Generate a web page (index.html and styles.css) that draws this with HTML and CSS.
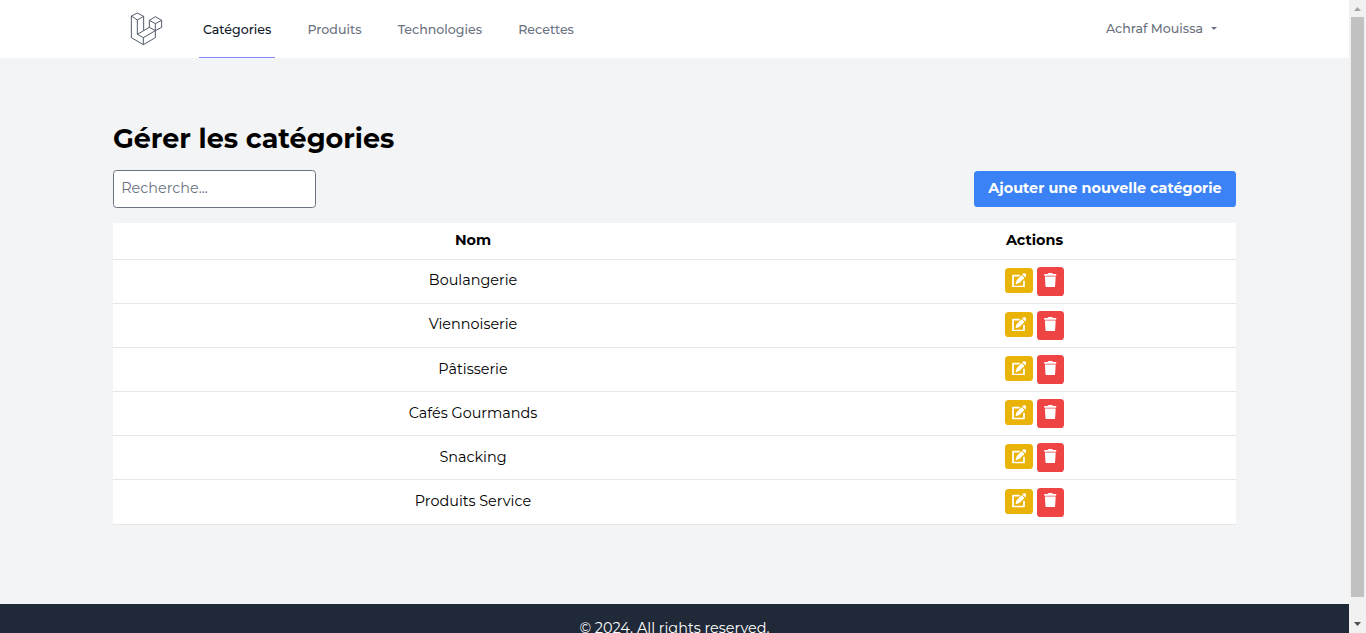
FILE: index.html
```html
<!DOCTYPE html>
<html lang="fr">
<head>
<meta charset="utf-8">
<title>Gérer les catégories</title>
<link rel="stylesheet" href="styles.css">
</head>
<body>
<svg width="0" height="0" class="sprite">
  <symbol id="edit" viewBox="0 0 512 512"><path d="M471.6 21.7c-21.9-21.9-57.3-21.9-79.2 0L362.3 51.7l97.9 97.9 30.1-30.1c21.9-21.9 21.9-57.3 0-79.2L471.6 21.7zM172.4 241.7c-6.1 6.1-10.8 13.6-13.5 21.9l-29.6 88.8c-2.9 8.6-.6 18.1 5.8 24.6s15.9 8.7 24.6 5.8l88.8-29.6c8.2-2.7 15.7-7.4 21.9-13.5L437.7 172.3 339.7 74.3 172.4 241.7z"/><path d="M270 90H36V476H420V270" fill="none" stroke="#fff" stroke-width="62" stroke-linejoin="round"/></symbol>
  <symbol id="trash" viewBox="0 0 448 512"><path d="M135.2 17.7L128 32H32C14.3 32 0 46.3 0 64S14.3 96 32 96H416c17.7 0 32-14.3 32-32s-14.3-32-32-32H320l-7.2-14.3C307.4 6.8 296.3 0 284.2 0H163.8c-12.1 0-23.2 6.8-28.6 17.7zM416 128H32L53.2 467c1.6 25.3 22.6 45 47.9 45H346.9c25.3 0 46.3-19.7 47.9-45L416 128z"/></symbol>
</svg>
<div class="window">
  <div class="page">
    <header class="navbar">
      <svg class="logo" viewBox="60 36 99 102"><path d="M64 48L82 39L101 49L82 60ZM64 48V113L100 134L136 113V92M82 60V103L100 113V134M101 49V92M82 103L118 82V61L136 50L155 61V82L136 92L118 82M118 61L136 71L155 61M136 71V92L100 113"/></svg>
      <nav class="links">
        <a class="link active">Catégories</a>
        <a class="link">Produits</a>
        <a class="link">Technologies</a>
        <a class="link">Recettes</a>
      </nav>
      <div class="user"><span>Achraf Mouissa</span><i class="caret"></i></div>
    </header>
    <main class="content">
      <h1 class="title">Gérer les catégories</h1>
      <div class="toolbar">
        <input class="search" type="text" placeholder="Recherche...">
        <button class="add">Ajouter une nouvelle catégorie</button>
      </div>
      <div class="table">
        <div class="row head"><div>Nom</div><div>Actions</div></div>
        <div class="row"><div class="name">Boulangerie</div><div class="actions"><span class="btn edit"><svg><use href="#edit"/></svg></span><span class="btn trash"><svg><use href="#trash"/></svg></span></div></div>
        <div class="row"><div class="name">Viennoiserie</div><div class="actions"><span class="btn edit"><svg><use href="#edit"/></svg></span><span class="btn trash"><svg><use href="#trash"/></svg></span></div></div>
        <div class="row"><div class="name">Pâtisserie</div><div class="actions"><span class="btn edit"><svg><use href="#edit"/></svg></span><span class="btn trash"><svg><use href="#trash"/></svg></span></div></div>
        <div class="row"><div class="name">Cafés Gourmands</div><div class="actions"><span class="btn edit"><svg><use href="#edit"/></svg></span><span class="btn trash"><svg><use href="#trash"/></svg></span></div></div>
        <div class="row"><div class="name">Snacking</div><div class="actions"><span class="btn edit"><svg><use href="#edit"/></svg></span><span class="btn trash"><svg><use href="#trash"/></svg></span></div></div>
        <div class="row"><div class="name">Produits Service</div><div class="actions"><span class="btn edit"><svg><use href="#edit"/></svg></span><span class="btn trash"><svg><use href="#trash"/></svg></span></div></div>
      </div>
    </main>
    <footer class="footer">© 2024. All rights reserved.</footer>
  </div>
  <div class="scrollbar">
    <svg class="arrow up" viewBox="0 0 17 17"><path d="M5 11L8.5 7L12 11Z"/></svg>
    <div class="thumb"></div>
    <svg class="arrow down" viewBox="0 0 17 17"><path d="M5 6L8.5 10L12 6Z"/></svg>
  </div>
</div>
</body>
</html>
```
FILE: styles.css
```css
* { box-sizing: border-box; }
body { margin: 0; font-family: Montserrat, Inter, sans-serif; font-size: 14.4px; color: #000; overflow: hidden; }
.sprite { display: none; }
.window { display: flex; height: 633px; overflow: hidden; }
.page { width: 1349px; background: #f3f4f6; display: flex; flex-direction: column; overflow: hidden; }
.navbar { height: 58px; flex: none; background: #fff; display: flex; padding: 0 132px 0 130px; }
.logo { width: 33px; height: 34px; margin-top: 12px; fill: none; stroke: #4b5563; stroke-width: 2.9; stroke-linejoin: round; }
.links { display: flex; gap: 28.4px; margin-left: 36px; }
.link { padding: 0 3.9px; line-height: 59px; height: 58px; font-size: 12.6px; font-weight: 500; color: #6b7280; white-space: nowrap; }
.active { color: #111827; border-bottom: 1px solid #818cf8; }
.user { margin-left: auto; display: flex; align-items: center; gap: 8px; height: 57px; font-size: 12.6px; font-weight: 500; color: #6b7280; }
.caret { border: 3px solid transparent; border-top: 3px solid #6b7280; border-bottom: 0; }
.content { height: 546px; flex: none; padding: 58px 113px 0; }
.title { margin: 0; height: 54px; font-size: 27px; font-weight: 700; line-height: 45px; }
.toolbar { height: 53px; display: flex; justify-content: space-between; align-items: flex-start; }
.search { width: 203px; height: 38px; border: 1px solid #6b7280; border-radius: 3.6px; background: #fff; padding: 0 7.2px 3px; font: inherit; }
.search::placeholder { color: #6b7280; opacity: 1; }
.add { width: 262px; height: 36px; margin-top: 1px; border: 0; border-radius: 3.6px; background: #3b82f6; color: #fff; font: inherit; font-weight: 700; padding: 0 0 2px; white-space: nowrap; }
.table { background: #fff; }
.row { display: grid; grid-template-columns: 720px 403px; height: 44.1px; border-bottom: 1px solid #e5e7eb; text-align: center; line-height: 40px; }
.head { height: 37px; line-height: 34px; font-weight: 700; }
.name { padding-top: 0.4px; }
.actions { display: flex; justify-content: center; gap: 4px; padding-top: 7.1px; }
.btn { display: block; border-radius: 3.6px; line-height: 0; }
.btn svg { fill: #fff; }
.edit { width: 28px; height: 25px; margin-top: 1px; background: #eab308; padding: 4.6px 6.2px; }
.edit svg { width: 14.6px; height: 14.6px; }
.trash { width: 27px; height: 29px; background: #ef4444; padding: 5.5px 7px; }
.trash svg { width: 12.6px; height: 14.4px; }
.footer { height: 60px; flex: none; background: #1f2937; color: #fff; text-align: center; line-height: 49px; }
.scrollbar { width: 17px; background: #f1f1f1; display: flex; flex-direction: column; }
.arrow { width: 17px; height: 17px; flex: none; }
.up { fill: #a3a3a3; }
.down { fill: #505050; margin-top: auto; }
.thumb { height: 580px; margin: 0 2px; background: #c1c1c1; }
```
